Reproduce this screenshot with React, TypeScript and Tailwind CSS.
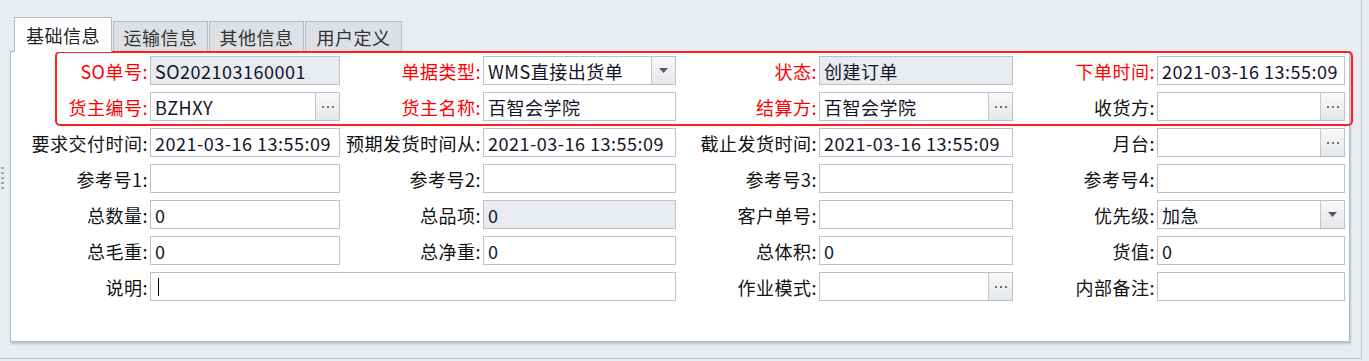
import React from "react";

type Field = {
    label: string;
    value?: string;
    red?: boolean;
    readonly?: boolean;
    btn?: "dots" | "drop";
    wide?: boolean;
    caret?: boolean;
};

const DATE = "2021-03-16 13:55:09";

const rows: Field[][] = [
    [
        { label: "SO单号", value: "SO202103160001", red: true, readonly: true },
        { label: "单据类型", value: "WMS直接出货单", red: true, btn: "drop" },
        { label: "状态", value: "创建订单", red: true, readonly: true },
        { label: "下单时间", value: DATE, red: true },
    ],
    [
        { label: "货主编号", value: "BZHXY", red: true, btn: "dots" },
        { label: "货主名称", value: "百智会学院", red: true },
        { label: "结算方", value: "百智会学院", red: true, btn: "dots" },
        { label: "收货方", btn: "dots" },
    ],
    [
        { label: "要求交付时间", value: DATE },
        { label: "预期发货时间从", value: DATE },
        { label: "截止发货时间", value: DATE },
        { label: "月台", btn: "dots" },
    ],
    [
        { label: "参考号1" },
        { label: "参考号2" },
        { label: "参考号3" },
        { label: "参考号4" },
    ],
    [
        { label: "总数量", value: "0" },
        { label: "总品项", value: "0", readonly: true },
        { label: "客户单号" },
        { label: "优先级", value: "加急", btn: "drop" },
    ],
    [
        { label: "总毛重", value: "0" },
        { label: "总净重", value: "0" },
        { label: "总体积", value: "0" },
        { label: "货值", value: "0" },
    ],
    [
        { label: "说明", wide: true, caret: true },
        { label: "作业模式", btn: "dots" },
        { label: "内部备注" },
    ],
];

const SideButton = ({ kind }: { kind: "dots" | "drop" }) => (
    <div className="w-[24px] h-full shrink-0 border-l border-[#c3c8cf] bg-gradient-to-b from-[#f8f9fa] to-[#e4e7eb] flex items-center justify-center">
        {kind === "dots" ? (
            <div className="flex gap-[3px]">
                <span className="w-[2px] h-[2px] bg-[#707070]" />
                <span className="w-[2px] h-[2px] bg-[#707070]" />
                <span className="w-[2px] h-[2px] bg-[#707070]" />
            </div>
        ) : (
            <svg width="9" height="5" viewBox="0 0 9 5">
                <path d="M0 0H9L4.5 5Z" fill="#5a5a5a" />
            </svg>
        )}
    </div>
);

const Cell = ({ f }: { f: Field }) => (
    <>
        <div
            className={`flex items-center justify-end pr-[2px] whitespace-nowrap ${
                f.red ? "text-[#ff0000]" : "text-[#111]"
            }`}
        >
            {f.label}:
        </div>
        <div
            className={`flex items-stretch border border-[#bcc1c8] ${
                f.readonly ? "bg-[#e8ebef]" : "bg-white"
            } ${f.wide ? "col-span-3" : ""}`}
        >
            <div className="flex-1 flex items-center pl-[4px] whitespace-nowrap overflow-hidden text-[#141428]">
                {f.caret ? <span className="ml-[3px] w-px h-[18px] bg-black" /> : f.value}
            </div>
            {f.btn && <SideButton kind={f.btn} />}
        </div>
    </>
);

const tabs = [
    { t: "运输信息", w: "w-[95px]" },
    { t: "其他信息", w: "w-[95px]" },
    { t: "用户定义", w: "w-[97px]" },
];

export default function App() {
    return (
        <div
            className="relative w-[1369px] h-[361px] bg-[#e9ecf0] overflow-hidden text-[18px] leading-none tracking-[0.5px]"
            style={{ fontFamily: '"Noto Sans CJK SC", "Noto Sans", sans-serif' }}
        >
            <div className="w-[1362px] h-[359px] border-r border-b border-[#c5c9cf] pl-[10px] pt-[17px]">
                {/* tabs */}
                <div className="flex items-end gap-px pl-[4px] h-[34px]">
                    <div className="relative z-10 h-[35px] w-[98px] -mb-px bg-white border border-b-0 border-[#b5bbc3] flex items-center justify-center text-[#222]">
                        基础信息
                    </div>
                    {tabs.map(({ t, w }) => (
                        <div
                            key={t}
                            className={`h-[30px] ${w} bg-[#dde1e6] border border-b-0 border-[#b5bbc3] flex items-center justify-center text-[#333]`}
                        >
                            {t}
                        </div>
                    ))}
                </div>
                {/* page */}
                <div className="w-[1340px] h-[291px] bg-white border border-[#b5bbc3] shadow-[1px_2px_2px_rgba(0,0,0,0.18)] pt-[4px]">
                    <div className="grid grid-cols-[139px_190px_143px_193px_143px_194px_144px_188px] auto-rows-[29px] gap-y-[7px]">
                        {rows.map((r, ri) => r.map((f, fi) => <Cell key={`${ri}-${fi}`} f={f} />))}
                    </div>
                </div>
            </div>

            {/* highlight around required fields */}
            <div className="absolute left-[55px] top-[51px] w-[1298px] h-[75px] rounded-[5px] border-2 border-[#ff1f1f] pointer-events-none" />

            {/* splitter grip */}
            <div className="absolute left-[1px] top-[167px] flex flex-col gap-[3px]">
                {[0, 1, 2, 3, 4].map((i) => (
                    <span key={i} className="w-[3px] h-[2px] bg-[#9ea6b0]" />
                ))}
            </div>
        </div>
    );
}
